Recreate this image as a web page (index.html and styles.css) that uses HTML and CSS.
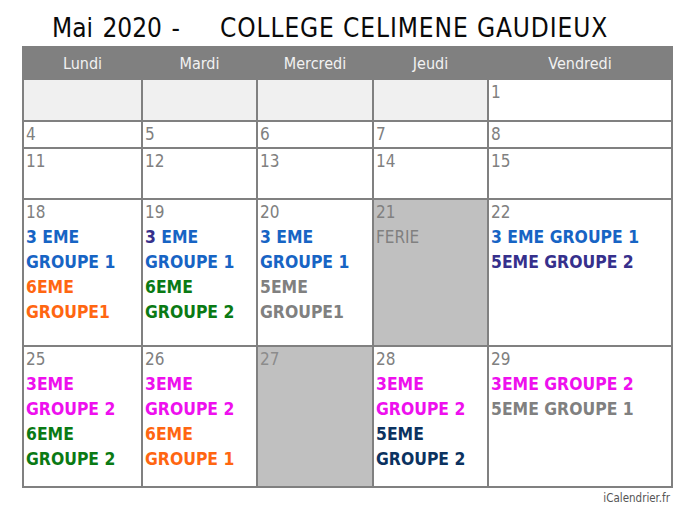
FILE: index.html
```html
<!DOCTYPE html>
<html lang="fr">
<head>
<meta charset="utf-8">
<title>Mai 2020 - COLLEGE CELIMENE GAUDIEUX</title>
<link rel="stylesheet" href="styles.css">
</head>
<body>
<div class="page">
  <h1 class="title"><span class="t-month">Mai 2020 -</span><span class="t-school">COLLEGE CELIMENE GAUDIEUX</span></h1>
  <div class="cal">
    <div class="hd">Lundi</div>
    <div class="hd">Mardi</div>
    <div class="hd">Mercredi</div>
    <div class="hd">Jeudi</div>
    <div class="hd">Vendredi</div>

    <div class="c empty"></div>
    <div class="c empty"></div>
    <div class="c empty"></div>
    <div class="c empty"></div>
    <div class="c"><div class="n">1</div></div>

    <div class="c"><div class="n">4</div></div>
    <div class="c"><div class="n">5</div></div>
    <div class="c"><div class="n">6</div></div>
    <div class="c"><div class="n">7</div></div>
    <div class="c"><div class="n">8</div></div>

    <div class="c"><div class="n">11</div></div>
    <div class="c"><div class="n">12</div></div>
    <div class="c"><div class="n">13</div></div>
    <div class="c"><div class="n">14</div></div>
    <div class="c"><div class="n">15</div></div>

    <div class="c">
      <div class="n">18</div>
      <div class="ev blue">3 EME</div>
      <div class="ev blue">GROUPE 1</div>
      <div class="ev orange">6EME</div>
      <div class="ev orange">GROUPE1</div>
    </div>
    <div class="c">
      <div class="n">19</div>
      <div class="ev blue"><span class="purple">3</span> EME</div>
      <div class="ev blue">GROUPE 1</div>
      <div class="ev green">6EME</div>
      <div class="ev green">GROUPE 2</div>
    </div>
    <div class="c">
      <div class="n">20</div>
      <div class="ev blue">3 EME</div>
      <div class="ev blue">GROUPE 1</div>
      <div class="ev gray">5EME</div>
      <div class="ev gray">GROUPE1</div>
    </div>
    <div class="c off">
      <div class="n">21</div>
      <div class="note">FERIE</div>
    </div>
    <div class="c">
      <div class="n">22</div>
      <div class="ev blue">3 EME GROUPE 1</div>
      <div class="ev purple">5EME GROUPE 2</div>
    </div>

    <div class="c">
      <div class="n">25</div>
      <div class="ev magenta">3EME</div>
      <div class="ev magenta">GROUPE 2</div>
      <div class="ev green">6EME</div>
      <div class="ev green">GROUPE 2</div>
    </div>
    <div class="c">
      <div class="n">26</div>
      <div class="ev magenta">3EME</div>
      <div class="ev magenta">GROUPE 2</div>
      <div class="ev orange">6EME</div>
      <div class="ev orange">GROUPE 1</div>
    </div>
    <div class="c off">
      <div class="n n-off">27</div>
    </div>
    <div class="c">
      <div class="n">28</div>
      <div class="ev magenta">3EME</div>
      <div class="ev magenta">GROUPE 2</div>
      <div class="ev navy">5EME</div>
      <div class="ev navy">GROUPE 2</div>
    </div>
    <div class="c">
      <div class="n">29</div>
      <div class="ev magenta">3EME GROUPE 2</div>
      <div class="ev gray">5EME GROUPE 1</div>
    </div>
  </div>
  <div class="footer">iCalendrier.fr</div>
</div>
</body>
</html>
```
FILE: styles.css
```css
html, body {
  margin: 0;
  padding: 0;
  background: #ffffff;
}

.page {
  width: 692px;
  font-family: "DejaVu Sans Condensed", "DejaVu Sans", sans-serif;
  font-stretch: condensed;
}

.title {
  margin: 0;
  height: 46px;
  box-sizing: border-box;
  padding: 13px 0 0 52px;
  font-family: "DejaVu Sans Condensed", "DejaVu Sans", sans-serif;
  font-stretch: condensed;
  font-weight: normal;
  font-size: 26px;
  line-height: 30px;
  color: #0a0a0a;
  white-space: nowrap;
}

.t-month {
  display: inline-block;
  width: 168px;
  word-spacing: 2px;
}

.t-school {
  letter-spacing: 0.9px;
}

.cal {
  margin-left: 22px;
  width: 651px;
  box-sizing: border-box;
  display: grid;
  grid-template-columns: 117px 113px 114px 113px 182px;
  grid-template-rows: 30px 40px 25px 49px 145px 139px;
  gap: 2px;
  padding: 2px;
  background: #808080;
}

.hd {
  background: #808080;
  color: #f2f2f2;
  font-size: 16px;
  line-height: 32px;
  text-align: center;
}

.c {
  background: #ffffff;
  padding-left: 2px;
  font-size: 17px;
  line-height: 25px;
  overflow: hidden;
  white-space: nowrap;
}

.empty {
  background: #f0f0f0;
}

.off {
  background: #c0c0c0;
}

.n {
  color: #808080;
}

.n-off {
  color: #8c8c8c;
}

.note {
  color: #808080;
}

.ev {
  font-weight: bold;
  font-size: 17.4px;
}

.blue { color: #1764c4; }
.purple { color: #36308c; }
.orange { color: #ff6611; }
.green { color: #0a7a14; }
.gray { color: #808080; }
.magenta { color: #ee10ee; }
.navy { color: #0b3260; }

.footer {
  width: 670px;
  margin-top: 2px;
  text-align: right;
  font-size: 11.5px;
  line-height: 16px;
  color: #555555;
}
```
